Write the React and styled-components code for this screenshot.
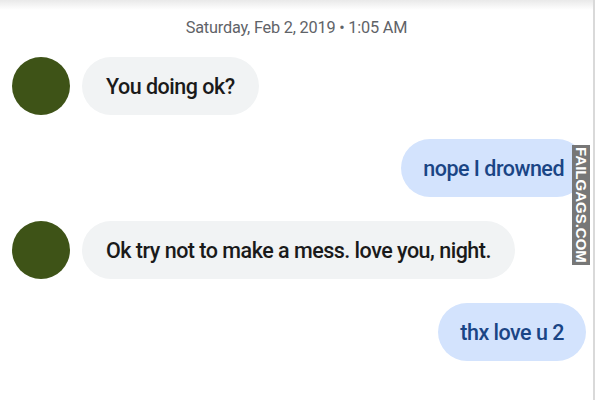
import React from "react";
import styled, { createGlobalStyle } from "styled-components";

const Global = createGlobalStyle`
  html, body { margin: 0; padding: 0; background: #ffffff; }
  body { font-family: Roboto, "Noto Sans", Arial, sans-serif; }
  #root { width: 600px; height: 400px; overflow: hidden; }
`;

const Page = styled.div`
  position: relative;
  box-sizing: border-box;
  width: 595px;
  height: 400px;
  padding-top: 13px;
  border-right: 2px solid #d9d9d9;
  background: linear-gradient(to bottom, #e9e9e9 0px, #ffffff 10px);
`;

const DateLine = styled.div`
  text-align: center;
  font-size: 16.3px;
  letter-spacing: -0.2px;
  line-height: 30px;
  color: #5f6368;
`;

const Thread = styled.div`
  margin-top: 14px;
  display: flex;
  flex-direction: column;
  gap: 24px;
`;

const Row = styled.div`
  display: flex;
  align-items: center;
  gap: 12px;
  justify-content: ${(p) => (p.$out ? "flex-end" : "flex-start")};
  padding: ${(p) => (p.$out ? "0 7px 0 0" : "0 0 0 12px")};
`;

const Avatar = styled.div`
  width: 58px;
  height: 58px;
  border-radius: 50%;
  background: #3e5317;
  flex-shrink: 0;
`;

const Bubble = styled.div`
  height: 58px;
  box-sizing: border-box;
  display: flex;
  align-items: center;
  padding: 0 ${(p) => (p.$out ? "22px" : "24px")};
  border-radius: 29px;
  font-size: 21.5px;
  font-weight: 500;
  letter-spacing: -0.5px;
  white-space: nowrap;
  background: ${(p) => (p.$out ? "#d3e3fd" : "#f1f3f4")};
  color: ${(p) => (p.$out ? "#1a4585" : "#1a1a1a")};
`;

const Watermark = styled.div`
  position: absolute;
  left: 572px;
  top: 145px;
  width: 18px;
  height: 120px;
  background: #777777;
  color: #ffffff;
  font-family: "Liberation Sans", Arial, sans-serif;
  font-weight: bold;
  font-size: 15px;
  writing-mode: vertical-rl;
  display: flex;
  align-items: center;
  justify-content: center;
`;

const messages = [
  { out: false, text: "You doing ok?" },
  { out: true, text: "nope I drowned" },
  { out: false, text: "Ok try not to make a mess. love you, night." },
  { out: true, text: "thx love u 2" },
];

export default function App() {
  return (
    <>
      <Global />
      <Page>
        <DateLine>Saturday, Feb 2, 2019 • 1:05 AM</DateLine>
        <Thread>
          {messages.map((m, i) => (
            <Row key={i} $out={m.out}>
              {!m.out && <Avatar />}
              <Bubble $out={m.out}>{m.text}</Bubble>
            </Row>
          ))}
        </Thread>
        <Watermark>FAILGAGS.COM</Watermark>
      </Page>
    </>
  );
}
